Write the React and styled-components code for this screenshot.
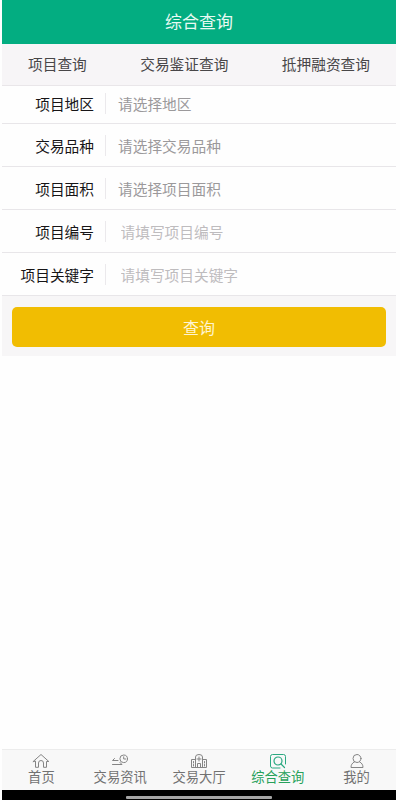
import React from 'react';
import styled, { createGlobalStyle } from 'styled-components';

const GlobalStyle = createGlobalStyle`
  * { box-sizing: border-box; }
  body { margin: 0; background: #fefefe; }
  button, input { font: inherit; border: 0; padding: 0; margin: 0; background: none; }
`;

const Phone = styled.div`
  width: 394px;
  height: 800px;
  margin-left: 2px;
  display: flex;
  flex-direction: column;
  background: #fefefe;
  color: #444;
  font-family: 'Noto Sans CJK SC', sans-serif;
  font-size: 14.7px;
  white-space: nowrap;
`;

const Header = styled.header`
  height: 44px;
  flex: none;
  display: flex;
  align-items: center;
  justify-content: center;
  padding-bottom: 4px;
  background: #03ad81;
  color: #e9faf3;
  font-size: 17px;
`;

const Tabs = styled.nav`
  height: 42px;
  flex: none;
  display: flex;
  align-items: center;
  justify-content: space-between;
  padding: 0 26px 2px;
  background: #f7f5f7;
  border-bottom: 1px solid #e9e6e9;
`;

const Tab = styled.button`
  color: #484648;
  line-height: 22px;
`;

const Row = styled.label`
  height: ${(p) => p.$height}px;
  padding-bottom: ${(p) => p.$lift || 0}px;
  flex: none;
  display: flex;
  align-items: center;
  border-bottom: 1px solid #e8e6e9;
`;

const Label = styled.span`
  width: 92px;
  text-align: right;
  color: #171517;
`;

const Divider = styled.span`
  width: 1px;
  height: 21px;
  margin-left: 11px;
  background: #ebe9ec;
`;

const Choice = styled.span`
  margin-left: 12px;
  color: #9b999b;
`;

const Field = styled.input`
  width: 240px;
  margin-left: 14.5px;
  outline: 0;
  &::placeholder { color: #bebcbe; opacity: 1; }
`;

const Actions = styled.div`
  height: 60px;
  flex: none;
  padding: 11px 10px 9px;
  background: #f7f6f7;
`;

const Submit = styled.button`
  display: block;
  width: 100%;
  height: 40px;
  border-radius: 5px;
  background: #f1bd02;
  color: #fff4cf;
  font-size: 16px;
`;

const Spacer = styled.main`
  flex: 1;
`;

const BottomNav = styled.nav`
  height: 41px;
  flex: none;
  display: grid;
  grid-template-columns: repeat(5, 1fr);
  background: #f8f8f8;
  border-top: 1px solid #ececec;
`;

const NavItem = styled.button`
  display: flex;
  flex-direction: column;
  align-items: center;
  padding-top: 3px;
  color: ${(p) => (p.$active ? '#27a15b' : '#727272')};
  font-size: 13.3px;
  line-height: 16px;
  svg { display: block; flex: none; color: ${(p) => (p.$active ? '#2ba981' : '#858585')}; }
`;

const SystemBar = styled.footer`
  height: 10px;
  flex: none;
  display: flex;
  justify-content: center;
  align-items: flex-end;
  padding-bottom: 1px;
  background: #000;
`;

const HomeHandle = styled.span`
  width: 146px;
  height: 3px;
  border-radius: 1px;
  background: #a5a5a5;
`;

const Icon = ({ children }) => (
  <svg width="18" height="16" viewBox="0 0 18 16" fill="none" stroke="currentColor" strokeWidth="1" strokeLinecap="round" strokeLinejoin="round">
    {children}
  </svg>
);

const rows = [
  { label: '项目地区', hint: '请选择地区', height: 38, lift: 2 },
  { label: '交易品种', hint: '请选择交易品种', height: 43 },
  { label: '项目面积', hint: '请选择项目面积', height: 43 },
  { label: '项目编号', hint: '请填写项目编号', height: 43, input: true },
  { label: '项目关键字', hint: '请填写项目关键字', height: 43, input: true },
];

const navItems = [
  { label: '首页', icon: <path d="M1.200 8.500 9 1.500l7.800 7h-2.300v5.800h-3V10a2.500 2.500 0 0 0-5 0v4.300h-3V8.500z" /> },
  {
    label: '交易资讯',
    icon: <><circle cx="12.700" cy="5.800" r="3.800" /><path d="M12.700 3.800v2.200h2M3.500 5.500 1.500 7.500H7M1.500 11.500h9.500l-2-2" /></>,
  },
  {
    label: '交易大厅',
    icon: <path d="M5.500 14.500V4A3.500 2.500 0 0 1 12.500 4v10.500M5.500 6.500h-4v8h15v-8h-4M7.500 14.500v-4h3v4M9 4v4M7 6h4M3.500 8.500V10M3.500 11.500V13M14.500 8.500V10M14.500 11.500V13" />,
  },
  {
    label: '综合查询',
    active: true,
    icon: <><path d="M11 15H3.500a2 2 0 0 1-2-2V3.500a2 2 0 0 1 2-2h11a2 2 0 0 1 2 2V11" /><circle cx="9" cy="8" r="4" strokeWidth="1.200" /><path d="m12 11 3.500 3.500" strokeWidth="1.200" /></>,
  },
  {
    label: '我的',
    icon: <><circle cx="9" cy="5.500" r="4" /><path d="M6.500 8.800C4 10 3 12 3 14.500h12c0-2.500-1-4.500-3.500-5.700" /></>,
  },
];

export default function App() {
  return (
    <>
      <GlobalStyle />
      <Phone>
        <Header>综合查询</Header>
        <Tabs>
          <Tab>项目查询</Tab>
          <Tab>交易鉴证查询</Tab>
          <Tab>抵押融资查询</Tab>
        </Tabs>
        {rows.map((row) => (
          <Row key={row.label} $height={row.height} $lift={row.lift}>
            <Label>{row.label}</Label>
            <Divider />
            {row.input ? <Field placeholder={row.hint} /> : <Choice>{row.hint}</Choice>}
          </Row>
        ))}
        <Actions>
          <Submit>查询</Submit>
        </Actions>
        <Spacer />
        <BottomNav>
          {navItems.map((item) => (
            <NavItem key={item.label} $active={item.active}>
              <Icon>{item.icon}</Icon>
              {item.label}
            </NavItem>
          ))}
        </BottomNav>
        <SystemBar>
          <HomeHandle />
        </SystemBar>
      </Phone>
    </>
  );
}
